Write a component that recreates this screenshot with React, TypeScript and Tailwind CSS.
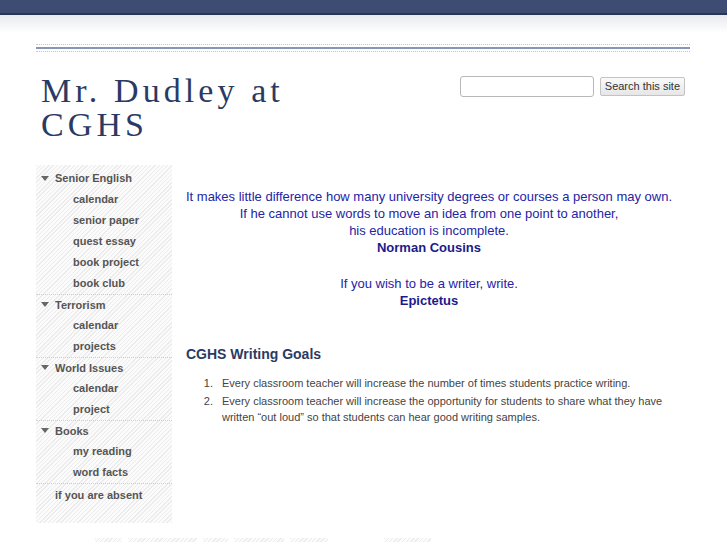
import React from "react";

const nav = [
  { title: "Senior English", items: ["calendar", "senior paper", "quest essay", "book project", "book club"] },
  { title: "Terrorism", items: ["calendar", "projects"] },
  { title: "World Issues", items: ["calendar", "project"] },
  { title: "Books", items: ["my reading", "word facts"] },
];

const goals = [
  "Every classroom teacher will increase the number of times students practice writing.",
  "Every classroom teacher will increase the opportunity for students to share what they have written “out loud” so that students can hear good writing samples.",
];

const hatch =
  "bg-[repeating-linear-gradient(135deg,#ececec_0px,#ececec_1px,#fbfbfb_1px,#fbfbfb_3px)]";

function Triangle() {
  return (
    <svg width="8" height="6" viewBox="0 0 8 6" className="mr-[6px] shrink-0">
      <path d="M0 0 L8 0 L4 5 Z" fill="#666" />
    </svg>
  );
}

export default function App() {
  return (
    <div className="min-h-[545px] w-full bg-white font-['Liberation_Sans',Arial,sans-serif]">
      {/* Top bar */}
      <div className="h-[13px] bg-[#3e4c74]" />
      <div className="h-[2px] bg-[#2a3553]" />
      <div className="h-[18px] bg-[linear-gradient(#e9eaee,#ffffff)]" />

      {/* Rules */}
      <div className="mx-[36px] mt-[11px] w-[654px]">
        <div className="border-t border-dotted border-[#c4c4c4]" />
        <div className="mt-[2px] h-[2px] bg-[#8a96b6]" />
        <div className="mt-[2px] border-t border-dotted border-[#c4c4c4]" />
      </div>

      {/* Header */}
      <div className="mx-[36px] flex w-[654px] items-start justify-between">
        <h1 className="ml-[5px] mt-[22px] w-[280px] font-['Liberation_Serif','Times_New_Roman',serif] text-[34px] leading-[34px] tracking-[0.12em] text-[#2b3a63]">
          Mr. Dudley at CGHS
        </h1>
        <div className="mr-[5px] mt-[24px] flex items-center gap-[6px]">
          <input
            className="h-[21px] w-[134px] rounded-[3px] border border-[#b8b8b8] bg-white"
            type="text"
          />
          <button className="h-[19px] rounded-[2px] border border-[#c3c3c3] bg-[linear-gradient(#fafafa,#e6e6e6)] px-[4px] text-[11px] leading-[17px] text-[#333]">
            Search this site
          </button>
        </div>
      </div>

      {/* Body */}
      <div className="mx-[36px] mt-[23px] flex w-[654px] items-start">
        <div className={`w-[136px] pb-[17px] pt-[3px] ${hatch}`}>
          {nav.map((g, gi) => (
            <div key={g.title} className={gi > 0 ? "border-t border-dotted border-[#cfcfcf]" : ""}>
              <div className={`flex ${gi > 0 ? "h-[20px]" : "h-[21px]"} items-center pl-[5px] text-[11px] font-bold text-[#555]`}>
                <Triangle />
                {g.title}
              </div>
              {g.items.map((it, i) => (
                <div key={i} className="flex h-[21px] items-center pl-[37px] text-[11px] font-bold text-[#555]">
                  {it}
                </div>
              ))}
            </div>
          ))}
          <div className="border-t border-dotted border-[#cfcfcf]">
            <div className="flex h-[22px] items-center pl-[19px] text-[11px] font-bold text-[#555]">
              if you are absent
            </div>
          </div>
        </div>

        <div className="ml-[14px] flex-1 pr-[18px]">
          <div className="mx-[-12px] mt-[23px] whitespace-nowrap text-center text-[13px] leading-[17px] text-[#2424a6]">
            <p>It makes little difference how many university degrees or courses a person may own.</p>
            <p>If he cannot use words to move an idea from one point to another,</p>
            <p>his education is incomplete.</p>
            <p className="font-bold text-[#1a1a8c]">Norman Cousins</p>
            <p className="h-[19px]" />
            <p>If you wish to be a writer, write.</p>
            <p className="font-bold text-[#1a1a8c]">Epictetus</p>
          </div>

          <h2 className="mt-[36px] text-[14px] font-bold leading-[18px] text-[#2b3a63]">CGHS Writing Goals</h2>
          <ol className="mt-[12px] text-[11px] leading-[16px] text-[#444]">
            {goals.map((g, i) => (
              <li key={i} className={`flex ${i > 0 ? "mt-[2px]" : ""}`}>
                <span className="w-[36px] shrink-0 pr-[9px] text-right">{i + 1}.</span>
                <span>{g}</span>
              </li>
            ))}
          </ol>
        </div>
      </div>

      {/* Footer */}
      <div className="ml-[95px] mt-[15px] flex h-[4px] gap-[6px]">
        {[27, 69, 25, 50, 38].map((w, i) => (
          <div key={i} className={hatch} style={{ width: w }} />
        ))}
        <div className={`ml-[50px] ${hatch}`} style={{ width: 47 }} />
      </div>
    </div>
  );
}
